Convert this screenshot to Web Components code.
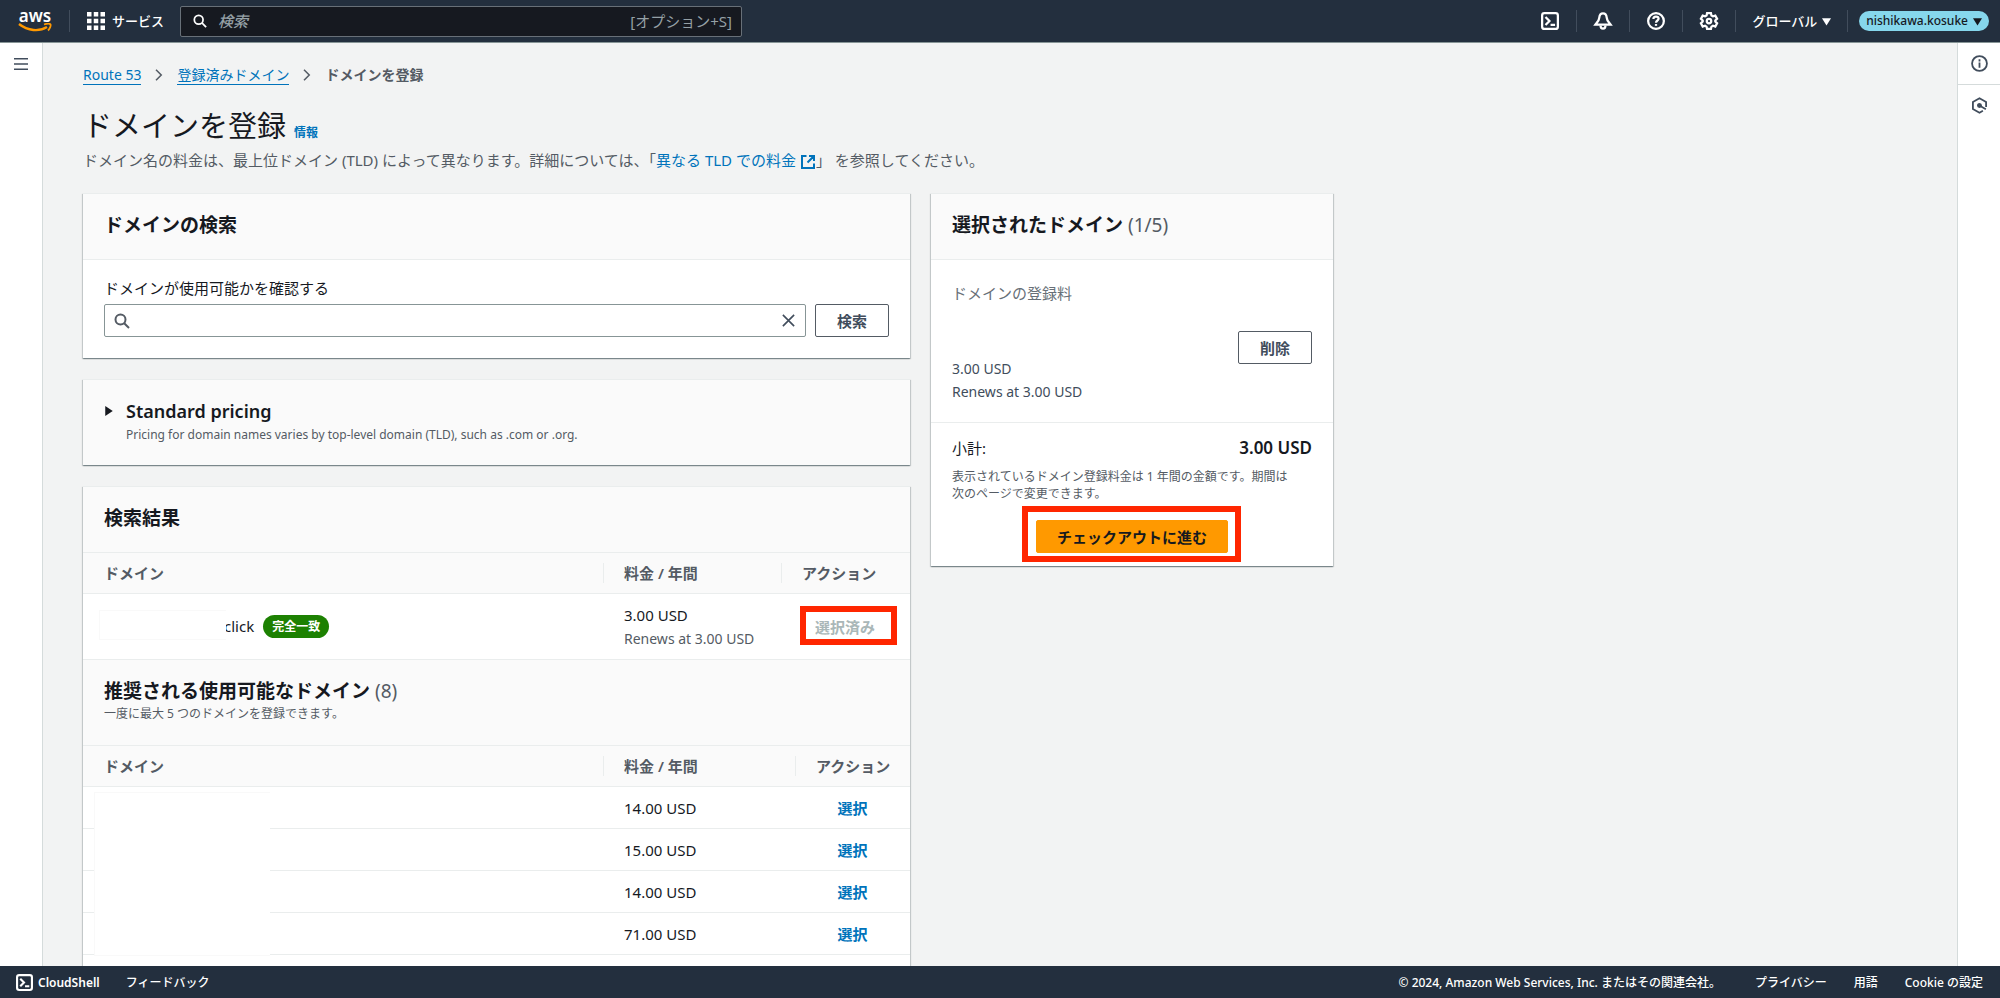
<!DOCTYPE html>
<html lang="ja">
<head>
<meta charset="utf-8">
<meta name="viewport" content="width=device-width, initial-scale=1">
<title>ドメインを登録 | Route 53</title>
<style>
  html, body { height: 100%; }
  body {
    margin: 0;
    overflow: hidden;
    font-family: "Noto Sans", "Noto Sans CJK JP", sans-serif;
    font-size: 15px;
    line-height: 22px;
    color: #16191f;
    background: #f2f3f3;
    --navy: #232f3e;
    --link: #0073bb;
    --muted: #545b64;
    --line: #eaeded;
    --mark: #ff2600;
  }
</style>
</head>
<body>
<console-app></console-app>
<script>
const define = (name, html, setup) => {
  const template = document.createElement('template');
  template.innerHTML = '<style>*{box-sizing:border-box}h1,h2,p,ol,ul{margin:0;padding:0;font-weight:inherit}button,input{font:inherit;color:inherit;margin:0}a{text-decoration:none;color:var(--link)}</style>' + html;
  customElements.define(name, class extends HTMLElement {
    constructor() {
      super();
      this.attachShadow({ mode: 'open' }).append(template.content.cloneNode(true));
    }
    connectedCallback() { if (setup) setup(this, this.shadowRoot); }
  });
};

/* Icons share a 16-unit grid and take their colour from the text. */
const ICONS = {
  search: '<circle cx="6.5" cy="6.5" r="5"/><path d="M10.2 10.2 15 15"/>',
  close: '<path d="M2 2l12 12M14 2 2 14"/>',
  shell: '<rect x="1" y="1" width="14" height="14" rx="2"/><path d="M4 4.5 7.5 8 4 11.5M8.5 11.5h4"/>',
  bell: '<path d="M8 1.2C6 1.200 4.900 2.900 4.700 5 4.500 8 2.600 9.300 1.200 11.300h13.600C13.400 9.300 11.500 8 11.300 5 11.100 2.900 10 1.200 8 1.200z"/><path d="M5.800 12c0 1.600.8 2.800 2.200 2.800s2.200-1.200 2.200-2.800"/>',
  help: '<circle cx="8" cy="8" r="7"/><path d="M5.700 6.300C5.700 4.900 6.700 4 8 4s2.300.9 2.300 2.100C10.300 7.600 8 7.600 8 9.500"/><path d="M8 10.700v1.600"/>',
  gear: '<path d="M6.300 1h3.400l.5 2.100 1.300.8 2.100-.7 1.600 2.900L13.600 7.600v.9l1.600 1.500-1.600 2.900-2.100-.7-1.300.8-.5 2h-3.400l-.5-2-1.300-.8-2.100.7L.8 10l1.600-1.500v-.9L.8 6.100l1.600-2.900 2.100.7 1.300-.8z"/><circle cx="8" cy="8" r="2"/>',
  menu: '<path d="M0 2h16M0 8h16M0 14h16"/>',
  info: '<circle cx="8" cy="8" r="7"/><path d="M8 7v5M8 4v2"/>',
  hex: '<path d="M14.200 9.500V4.700L8 1.200 1.800 4.700v6.600L8 14.800l3.200-1.800"/><circle cx="8" cy="8" r="1.500" fill="currentColor"/><path d="M8 8l6 3.500"/>',
  external: '<path d="M6.500 2H2v12h12V9.500M9 2h5v5M14 2 7.500 8.500"/>',
  chevron: '<path d="M4 1l7 7-7 7"/>',
  grid: '<path stroke="none" fill="currentColor" d="M0 0h4v4H0zM6 0h4v4H6zM12 0h4v4h-4zM0 6h4v4H0zM6 6h4v4H6zM12 6h4v4h-4zM0 12h4v4H0zM6 12h4v4H6zM12 12h4v4h-4z"/>',
  down: '<path stroke="none" fill="currentColor" d="M0 2h16L8 15z"/>',
  right: '<path stroke="none" fill="currentColor" d="M2 0v16l12-8z"/>'
};
define('ui-icon', `
<style>
  :host { display: inline-block; flex: none; width: var(--size, 16px); height: var(--size, 16px); }
  svg { display: block; width: 100%; height: 100%; overflow: visible; fill: none; stroke: currentColor; stroke-width: var(--stroke, 2); }
</style>
<svg viewBox="0 0 16 16" aria-hidden="true"></svg>`,
(host, root) => { root.querySelector('svg').innerHTML = ICONS[host.getAttribute('name')]; });

define('aws-logo', `
<style>
  :host { display: block; width: 34px; }
  a { display: block; color: #fff; font-size: 17px; font-weight: 600; line-height: 14px; text-align: center; }
  svg { display: block; width: 34px; height: 10px; }
</style>
<a href="#" aria-label="aws">aws<svg viewBox="0 0 34 10" aria-hidden="true"><path d="M1 1c9 7 20 8 28 3" fill="none" stroke="#ff9900" stroke-width="2.400"/><path d="M26 1.500c3-1 6-1 6.500 0s-.5 4-2.500 6" fill="none" stroke="#ff9900" stroke-width="1.800"/></svg></a>`);

define('top-nav', `
<style>
  :host { display: block; background: var(--navy); color: #fff; border-bottom: 1px solid #879596; }
  header { display: flex; align-items: center; height: 42px; padding: 0 11px 0 18px; font-size: 13px; font-weight: 500; }
  i { width: 1px; height: 22px; background: #414d5c; flex: none; }
  button { display: flex; align-items: center; background: none; border: 0; padding: 0; color: #fff; }
  .logo { margin-right: 17px; }
  .services { gap: 7px; margin: 0 16px 0 17px; --size: 18px; }
  form { display: flex; align-items: center; width: 562px; height: 31px; margin: 0; padding: 0 9px 0 12px; background: #161920; border: 1px solid #687078; border-radius: 2px; --size: 14px; }
  input { flex: 1; min-width: 0; margin-left: 11px; padding: 0; background: none; border: 0; outline: 0; font-size: 15px; color: #fff; }
  input::placeholder { color: #95a0a6; font-style: italic; opacity: 1; }
  kbd { font: inherit; font-size: 15px; font-weight: 400; color: #95a0a6; }
  nav { display: flex; align-items: center; margin-left: auto; }
  .tool { width: 52px; justify-content: center; --size: 18px; }
  .region { gap: 5px; margin: 0 16px; --size: 9px; }
  .user { gap: 5px; margin-left: 11px; padding: 0 7px; height: 20px; border-radius: 10px; background: #86d7ec; color: #16191f; font-size: 12px; --size: 9px; }
</style>
<header>
  <aws-logo class="logo"></aws-logo><i></i>
  <button class="services" type="button"><ui-icon name="grid"></ui-icon>サービス</button>
  <form role="search"><ui-icon name="search"></ui-icon><input type="text" aria-label="検索" placeholder="検索"><kbd>[オプション+S]</kbd></form>
  <nav>
    <button class="tool" type="button" aria-label="CloudShell"><ui-icon name="shell"></ui-icon></button><i></i>
    <button class="tool" type="button" aria-label="通知"><ui-icon name="bell"></ui-icon></button><i></i>
    <button class="tool" type="button" aria-label="ヘルプ"><ui-icon name="help"></ui-icon></button><i></i>
    <button class="tool" type="button" aria-label="設定"><ui-icon name="gear"></ui-icon></button><i></i>
    <button class="region" type="button">グローバル<ui-icon name="down"></ui-icon></button><i></i>
    <button class="user" type="button">nishikawa.kosuke<ui-icon name="down"></ui-icon></button>
  </nav>
</header>`);

define('app-footer', `
<style>
  :host { display: block; background: var(--navy); }
  footer { display: flex; align-items: center; height: 32px; padding: 1px 17px 0 16px; font-size: 12px; font-weight: 500; color: #fff; }
  a, button { color: #fff; }
  button { display: flex; align-items: center; gap: 5px; padding: 0; border: 0; background: none; margin-right: 26px; font-weight: 600; --size: 17px; }
  .legal { margin-left: auto; }
  .links { display: flex; gap: 27px; margin-left: 34px; }
</style>
<footer>
  <button type="button"><ui-icon name="shell"></ui-icon>CloudShell</button>
  <a href="#">フィードバック</a>
  <span class="legal">© 2024, Amazon Web Services, Inc. またはその関連会社。</span>
  <nav class="links"><a href="#">プライバシー</a><a href="#">用語</a><a href="#">Cookie の設定</a></nav>
</footer>`);

define('side-rail', `
<style>
  :host { display: flex; flex-direction: column; flex: none; width: 43px; background: #fff; color: var(--muted); border: 0 solid #d5dbdb; }
  :host([side="left"]) { border-right-width: 1px; }
  :host([side="right"]) { border-left-width: 1px; }
</style>
<slot></slot>`);

define('rail-button', `
<style>
  :host { display: block; }
  :host(:not(:last-of-type)) { border-bottom: 1px solid #d5dbdb; }
  button { display: flex; align-items: center; justify-content: center; width: 100%; height: 41px; padding: 0; border: 0; background: none; color: #414d5c; --stroke: 1.700; }
</style>
<button type="button"><ui-icon></ui-icon></button>`,
(host, root) => {
  root.querySelector('button').setAttribute('aria-label', host.getAttribute('label'));
  const icon = document.createElement('ui-icon');
  icon.setAttribute('name', host.getAttribute('icon'));
  root.querySelector('ui-icon').replaceWith(icon);
});

define('bread-crumbs', `
<style>
  :host { display: block; font-size: 14px; }
  ol { display: flex; align-items: center; gap: 12px; list-style: none; }
  li { display: flex; align-items: center; gap: 12px; color: var(--muted); font-weight: 600; --size: 12px; }
  a { border-bottom: 1px solid var(--link); line-height: 19px; font-weight: 400; }
</style>
<nav aria-label="パンくずリスト"><ol>
  <li><a href="#">Route 53</a><ui-icon name="chevron"></ui-icon></li>
  <li><a href="#">登録済みドメイン</a><ui-icon name="chevron"></ui-icon></li>
  <li>ドメインを登録</li>
</ol></nav>`);

define('page-heading', `
<style>
  :host { display: block; }
  div { display: flex; align-items: baseline; gap: 8px; }
  h1 { font-size: 29px; line-height: 38px; }
  .info { font-size: 12px; font-weight: 700; }
  p { margin-top: 4px; color: var(--muted); --size: 16px; }
  ui-icon { vertical-align: middle; margin-left: 4px; }
</style>
<div><h1>ドメインを登録</h1><a class="info" href="#">情報</a></div>
<p>ドメイン名の料金は、最上位ドメイン (TLD) によって異なります。詳細については、「<a href="#">異なる TLD での料金<ui-icon name="external"></ui-icon></a>」 を参照してください。</p>`);

define('ui-card', `
<style>
  :host { display: block; background: #fff; border-top: 1px solid var(--line); box-shadow: 0 1px 1px rgba(0,28,36,.3), 1px 1px 1px rgba(0,28,36,.15), -1px 1px 1px rgba(0,28,36,.15); }
</style>
<slot></slot>`);

define('card-header', `
<style>
  :host { display: block; padding: 18px 21px 21px; background: #fafafa; border-bottom: 1px solid var(--line); }
  h2 { font-size: 19px; line-height: 26px; font-weight: 700; }
  ::slotted(span) { font-weight: 400; color: var(--muted); }
  ::slotted(p) { margin: 0; font-size: 12px; line-height: 20px; color: var(--muted); }
</style>
<h2><slot></slot></h2><slot name="description"></slot>`);

define('ui-button', `
<style>
  :host { display: inline-block; flex: none; }
  button { display: block; width: 100%; height: 33px; padding: 0 21px; border: 1px solid #545b64; border-radius: 2px; background: #fff; color: #414d5c; font-weight: 700; font-size: 15px; line-height: 20px; white-space: nowrap; }
  :host([kind="primary"]) button { padding: 0; background: #ff9900; border-color: #ff9900; color: #16191f; }
  :host([kind="link"]) button { height: 24px; padding: 0; border: 0; background: none; color: var(--link); }
  :host([kind="link"][disabled]) button { color: #aab7b8; }
</style>
<button type="button"><slot></slot></button>`,
(host, root) => { root.querySelector('button').disabled = host.hasAttribute('disabled'); });

define('domain-search', `
<style>
  :host { display: block; padding: 16px 21px 21px; }
  label { display: block; line-height: 24px; margin-bottom: 4px; }
  form { display: flex; gap: 9px; margin: 0; }
  .field { flex: 1; display: flex; align-items: center; gap: 10px; height: 33px; padding: 0 9px; border: 1px solid #879596; border-radius: 2px; color: var(--muted); }
  input { flex: 1; min-width: 0; padding: 0; border: 0; outline: 0; background: none; }
  .clear { display: flex; padding: 0; border: 0; background: none; color: #414d5c; --size: 15px; --stroke: 1.700; }
</style>
<label for="query">ドメインが使用可能かを確認する</label>
<form>
  <div class="field"><ui-icon name="search"></ui-icon><input id="query" type="text"><button class="clear" type="button" aria-label="クリア"><ui-icon name="close"></ui-icon></button></div>
  <ui-button>検索</ui-button>
</form>`);

define('pricing-section', `
<style>
  :host { display: block; background: #fafafa; padding: 17px 21px 20px; }
  button { display: flex; align-items: center; gap: 12px; padding: 0; border: 0; background: none; font-size: 18px; line-height: 28px; font-weight: 600; --size: 10px; }
  p { padding-left: 22px; font-size: 12px; line-height: 20px; color: var(--muted); }
</style>
<button type="button" aria-expanded="false"><ui-icon name="right"></ui-icon>Standard pricing</button>
<p>Pricing for domain names varies by top-level domain (TLD), such as .com or .org.</p>`);

const TABLE_STYLE = `
<style>
  :host { display: block; position: relative; }
  table { width: 100%; border-collapse: separate; border-spacing: 0; table-layout: fixed; }
  .price { width: 178px; }
  th { position: relative; height: 41px; padding: 0 0 0 21px; text-align: left; font-weight: 600; color: var(--muted); background: #fafafa; border-bottom: 1px solid var(--line); }
  th + th::before { content: ""; position: absolute; left: 0; top: 10px; bottom: 10px; width: 1px; background: var(--line); }
  td { padding: 0 0 0 21px; border-bottom: 1px solid var(--line); }
  .mask { position: absolute; background: #fff; border: 1px solid #f9f9f9; border-right: 0; }
</style>`;

define('result-table', TABLE_STYLE + `
<style>
  .action { width: 129px; }
  td { height: 66px; line-height: 23px; }
  .name { display: flex; align-items: center; gap: 9px; padding-left: 120px; }
  .badge { padding: 0 9px; border-radius: 12px; background: #1d8102; color: #fff; font-size: 12px; font-weight: 600; line-height: 23px; }
  small { display: block; font-size: 14px; color: var(--muted); }
  td:last-child { padding-left: 34px; }
  .mask { left: 16px; top: 57px; width: 127px; height: 30px; }
  .mark { position: absolute; right: 13px; top: 53px; width: 97px; height: 39px; border: 6px solid var(--mark); }
</style>
<table>
  <colgroup><col><col class="price"><col class="action"></colgroup>
  <thead><tr><th>ドメイン</th><th>料金 / 年間</th><th>アクション</th></tr></thead>
  <tbody><tr>
    <td><div class="name">click<span class="badge">完全一致</span></div></td>
    <td>3.00 USD<small>Renews at 3.00 USD</small></td>
    <td><ui-button kind="link" disabled>選択済み</ui-button></td>
  </tr></tbody>
</table>
<div class="mask"></div><div class="mark"></div>`);

define('suggestion-table', TABLE_STYLE + `
<style>
  .price { width: 192px; }
  .action { width: 115px; }
  td { height: 42px; }
  td:last-child { padding: 0; text-align: center; }
  .mask { left: 11px; top: 46px; width: 176px; height: 164px; }
</style>
<table>
  <colgroup><col><col class="price"><col class="action"></colgroup>
  <thead><tr><th>ドメイン</th><th>料金 / 年間</th><th>アクション</th></tr></thead>
  <tbody></tbody>
</table>
<div class="mask"></div>`,
(host, root) => {
  const prices = ['14.00 USD', '15.00 USD', '14.00 USD', '71.00 USD'];
  root.querySelector('tbody').innerHTML = prices.map(price =>
    `<tr><td></td><td>${price}</td><td><ui-button kind="link">選択</ui-button></td></tr>`).join('') +
    '<tr><td></td><td></td><td></td></tr>';
});

define('selected-domains', `
<style>
  :host { display: block; }
  .item { padding: 21px 21px 19px; border-bottom: 1px solid var(--line); color: #414d5c; }
  .item h2 { color: #687078; font-size: 15px; line-height: 24px; }
  .row { display: flex; justify-content: space-between; margin-top: 26px; }
  .row p { padding-top: 26px; font-size: 14px; line-height: 23px; }
  .total { padding: 13px 21px 13px; }
  .sum { display: flex; justify-content: space-between; line-height: 24px; }
  .sum strong { font-size: 17px; font-weight: 600; }
  .note { margin-top: 8px; padding-right: 20px; font-size: 12px; line-height: 17px; color: var(--muted); }
  .checkout { position: relative; width: 192px; margin: 18px auto 0; }
  .checkout ui-button { display: block; }
  .mark { position: absolute; inset: -14px -13px -9px -14px; border: 6px solid var(--mark); pointer-events: none; }
</style>
<div class="item">
  <h2>ドメインの登録料</h2>
  <div class="row"><p>3.00 USD<br>Renews at 3.00 USD</p><ui-button>削除</ui-button></div>
</div>
<div class="total">
  <div class="sum"><span>小計:</span><strong>3.00 USD</strong></div>
  <p class="note">表示されているドメイン登録料金は 1 年間の金額です。期間は次のページで変更できます。</p>
  <div class="checkout"><ui-button kind="primary">チェックアウトに進む</ui-button><div class="mark"></div></div>
</div>`);

define('console-app', `
<style>
  :host { display: flex; flex-direction: column; height: 100vh; }
  .body { flex: 1; display: flex; min-height: 0; }
  main { flex: 1; min-width: 0; overflow: hidden; padding: 21px 40px 0; }
  page-heading { margin: 21px 0 22px; }
  .columns { display: grid; grid-template-columns: minmax(0, 827fr) minmax(0, 402fr); gap: 21px; max-width: 1250px; align-items: start; }
  .stack { display: grid; gap: 21px; }
</style>
<top-nav></top-nav>
<div class="body">
  <side-rail side="left"><rail-button icon="menu" label="メニュー" style="--size:14px"></rail-button></side-rail>
  <main>
    <bread-crumbs></bread-crumbs>
    <page-heading></page-heading>
    <div class="columns">
      <div class="stack">
        <ui-card><card-header>ドメインの検索</card-header><domain-search></domain-search></ui-card>
        <ui-card><pricing-section></pricing-section></ui-card>
        <ui-card>
          <card-header>検索結果</card-header>
          <result-table></result-table>
          <card-header>推奨される使用可能なドメイン <span>(8)</span><p slot="description">一度に最大 5 つのドメインを登録できます。</p></card-header>
          <suggestion-table></suggestion-table>
        </ui-card>
      </div>
      <ui-card><card-header>選択されたドメイン <span>(1/5)</span></card-header><selected-domains></selected-domains></ui-card>
    </div>
  </main>
  <side-rail side="right" style="--size:17px"><rail-button icon="info" label="情報"></rail-button><rail-button icon="hex" label="診断"></rail-button></side-rail>
</div>
<app-footer></app-footer>`);
</script>
</body>
</html>
